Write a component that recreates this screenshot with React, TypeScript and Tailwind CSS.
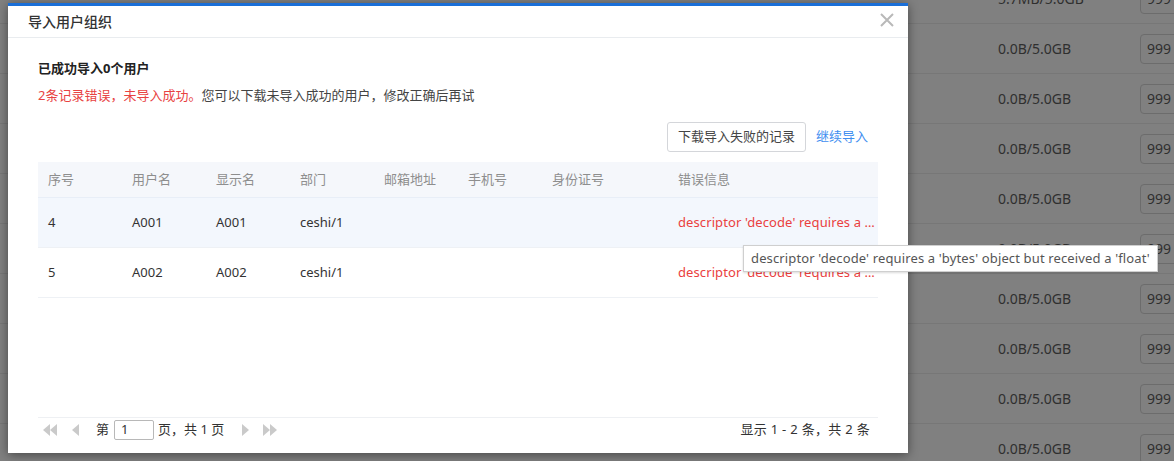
import React from 'react';

const font = { fontFamily: '"Noto Sans", "Noto Sans CJK SC", sans-serif' };

const bgRows = ['5.7MB/5.0GB', '0.0B/5.0GB', '0.0B/5.0GB', '0.0B/5.0GB', '0.0B/5.0GB', '0.0B/5.0GB', '0.0B/5.0GB', '0.0B/5.0GB', '0.0B/5.0GB', '0.0B/5.0GB'];

const columns = [
    { label: '序号', w: 'w-[84px]' },
    { label: '用户名', w: 'w-[84px]' },
    { label: '显示名', w: 'w-[84px]' },
    { label: '部门', w: 'w-[84px]' },
    { label: '邮箱地址', w: 'w-[84px]' },
    { label: '手机号', w: 'w-[84px]' },
    { label: '身份证号', w: 'w-[126px]' },
];

const rows = [
    { no: '4', user: 'A001', name: 'A001', dept: 'ceshi/1', hover: true },
    { no: '5', user: 'A002', name: 'A002', dept: 'ceshi/1', hover: false },
];

const errorText = "descriptor 'decode' requires a 'bytes' object but received a 'float'";

const TriLeft = ({ double }: { double?: boolean }) => (
    <svg width={double ? 14 : 8} height="14" viewBox={double ? '0 0 14 14' : '0 0 8 14'}>
        {double ? (
            <>
                <polygon points="7,1 0,7 7,13" fill="#cacaca" />
                <polygon points="14,1 7,7 14,13" fill="#cacaca" />
            </>
        ) : (
            <polygon points="8,1 1,7 8,13" fill="#cacaca" />
        )}
    </svg>
);

const TriRight = ({ double }: { double?: boolean }) => (
    <svg width={double ? 14 : 8} height="14" viewBox={double ? '0 0 14 14' : '0 0 8 14'}>
        {double ? (
            <>
                <polygon points="0,1 7,7 0,13" fill="#cacaca" />
                <polygon points="7,1 14,7 7,13" fill="#cacaca" />
            </>
        ) : (
            <polygon points="0,1 7,7 0,13" fill="#cacaca" />
        )}
    </svg>
);

const App = (): React.JSX.Element => {
    return (
        <div className="relative w-[1174px] h-[461px] overflow-hidden bg-[#808080]" style={font}>
            {/* Dimmed page behind the dialog */}
            <div className="flex flex-col -mt-[26px] w-[1220px]">
                {bgRows.map((t, i) => (
                    <div key={i} className="flex items-center h-[50px] border-b border-[#777777]">
                        <div className="w-[998px]" />
                        <div className="w-[142px] text-[14px] text-[#2f2f2f]">{t}</div>
                        <div className="w-[60px] h-[30px] rounded-[4px] border border-[#6c6c6c] flex items-center pl-[6px] text-[14px] text-[#2f2f2f]">
                            999
                        </div>
                    </div>
                ))}
            </div>

            {/* Dialog */}
            <div className="absolute left-[8px] top-[3px] w-[900px] h-[450px] bg-white border-t-[3px] border-[#1a6fd8] shadow-[0_2px_10px_rgba(0,0,0,0.45)] flex flex-col">
                {/* Header */}
                <div className="h-[32px] border-b border-[#e9ecef] flex items-center justify-between pl-[20px] pr-[14px]">
                    <span className="text-[14px] text-[#333] leading-[20px] font-medium">导入用户组织</span>
                    <svg width="14" height="14" viewBox="0 0 14 14" className="-mt-[4px]">
                        <path d="M1 1L13 13M13 1L1 13" stroke="#b9b9b9" strokeWidth="2" />
                    </svg>
                </div>

                {/* Body */}
                <div className="flex-1 flex flex-col px-[30px]">
                    <div className="pt-[20px] text-[13px] leading-[20px] font-bold text-[#222]">已成功导入0个用户</div>
                    <div className="mt-[7px] text-[13px] leading-[20px] text-[#444]">
                        <span className="text-[#e84242]">2条记录错误，未导入成功。</span>您可以下载未导入成功的用户，修改正确后再试
                    </div>

                    <div className="mt-[17px] flex items-center justify-end gap-[10px] pr-[10px]">
                        <button className="h-[30px] px-[10px] border border-[#d4d6da] rounded-[3px] text-[13px] text-[#444] bg-white">
                            下载导入失败的记录
                        </button>
                        <span className="text-[13px] text-[#3f8ef0]">继续导入</span>
                    </div>

                    {/* Table */}
                    <div className="mt-[10px] w-[840px] text-[13px]">
                        <div className="flex h-[36px] items-center bg-[#f5f7fb] border-b border-[#e8eef7] text-[#8e8e8e]">
                            {columns.map((c) => (
                                <div key={c.label} className={`${c.w} pl-[10px]`}>{c.label}</div>
                            ))}
                            <div className="flex-1 pl-[10px]">错误信息</div>
                        </div>
                        {rows.map((r) => (
                            <div
                                key={r.no}
                                className={`flex h-[50px] items-center border-b border-[#eef1f5] text-[#333] ${r.hover ? 'bg-[#f3f7fd]' : 'bg-white'}`}
                            >
                                <div className="w-[84px] pl-[10px]">{r.no}</div>
                                <div className="w-[84px] pl-[10px]">{r.user}</div>
                                <div className="w-[84px] pl-[10px]">{r.name}</div>
                                <div className="w-[84px] pl-[10px]">{r.dept}</div>
                                <div className="w-[84px] pl-[10px]" />
                                <div className="w-[84px] pl-[10px]" />
                                <div className="w-[126px] pl-[10px]" />
                                <div className="flex-1 min-w-0 pl-[10px] pr-[2px] text-[#ea4040] truncate tracking-[0.1px]">{errorText}</div>
                            </div>
                        ))}
                    </div>

                    <div className="flex-1" />

                    {/* Pagination */}
                    <div className="border-t border-[#eef0f3] h-[24px] mb-[12px] flex items-center justify-between text-[13px] text-[#333]">
                        <div className="flex items-center">
                            <span className="ml-[5px]"><TriLeft double /></span>
                            <span className="ml-[14px]"><TriLeft /></span>
                            <span className="ml-[17px]">第</span>
                            <span className="ml-[5px] w-[40px] h-[20px] border border-[#b8b8b8] rounded-[2px] flex items-center pl-[6px] leading-none">1</span>
                            <span className="ml-[4px]">页，共 1 页</span>
                            <span className="ml-[18px]"><TriRight /></span>
                            <span className="ml-[13px]"><TriRight double /></span>
                        </div>
                        <div className="pr-[8px] tracking-[0.3px]">显示 1 - 2 条，共 2 条</div>
                    </div>
                </div>
            </div>

            {/* Tooltip */}
            <div className="absolute left-[743px] top-[245px] h-[27px] px-[7px] flex items-center bg-white border border-[#cfcfcf] text-[13px] text-[#555] whitespace-nowrap tracking-[0.14px] shadow-[0_1px_2px_rgba(0,0,0,0.15)]">
                {errorText}
            </div>
        </div>
    );
};

export default App;
